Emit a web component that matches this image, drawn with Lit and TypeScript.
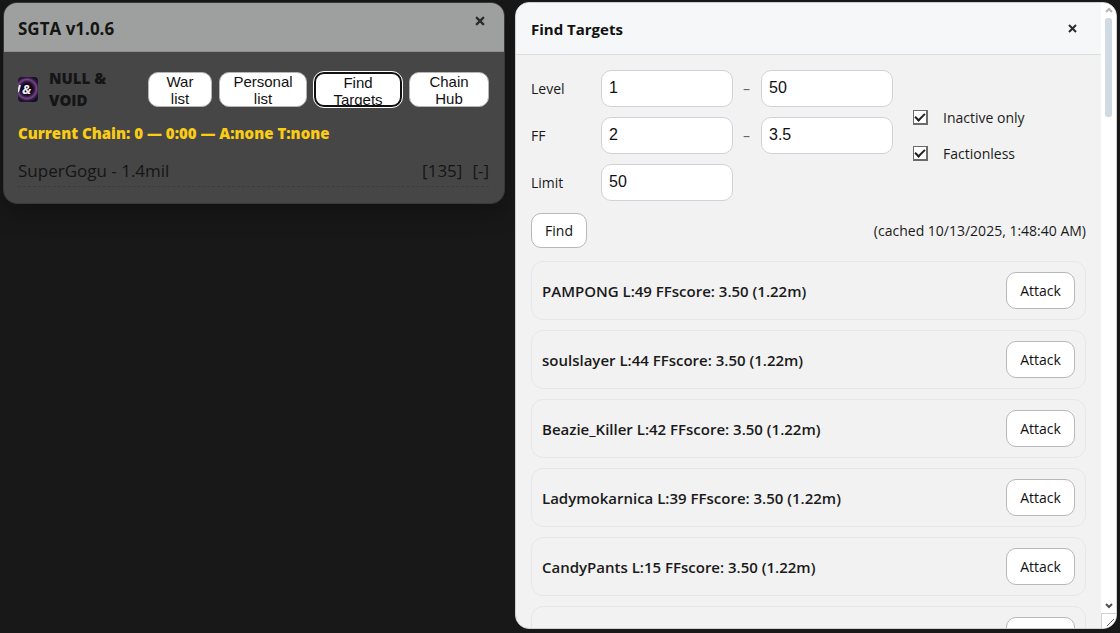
import { LitElement, html, css, svg } from "lit";
import { customElement, property } from "lit/decorators.js";
import { classMap } from "lit/directives/class-map.js";

interface Target {
  name: string;
  level: number;
  score: string;
  stats: string;
}

const TARGETS: Target[] = [
  { name: "PAMPONG", level: 49, score: "3.50", stats: "1.22m" },
  { name: "soulslayer", level: 44, score: "3.50", stats: "1.22m" },
  { name: "Beazie_Killer", level: 42, score: "3.50", stats: "1.22m" },
  { name: "Ladymokarnica", level: 39, score: "3.50", stats: "1.22m" },
  { name: "CandyPants", level: 15, score: "3.50", stats: "1.22m" },
  { name: "", level: 0, score: "", stats: "" },
];

const cross = svg`<path d="M1 1 L8 8 M8 1 L1 8" stroke="currentColor" stroke-width="2" fill="none" />`;

@customElement("chain-window")
export class ChainWindow extends LitElement {
  static styles = css`
    :host {
      display: block;
      border: 1px solid #393939;
      border-radius: 14px;
      background: #464646;
      color: #151515;
      overflow: hidden;
      box-shadow: 0 8px 24px rgba(0, 0, 0, 0.3);
    }
    .header {
      display: flex;
      justify-content: space-between;
      align-items: flex-start;
      height: 49px;
      padding: 0 15px 0 14px;
      background: #9ea09f;
      border-bottom: 1px solid #8f9190;
      box-sizing: border-box;
    }
    .title {
      margin: 0;
      font-size: 17px;
      line-height: 51px;
      font-weight: 700;
    }
    .close {
      border: 0;
      padding: 4px;
      margin-top: 9px;
      background: none;
      color: #2b2b2b;
      line-height: 0;
    }
    .body {
      padding: 15px 15px 16px 14px;
    }
    .top {
      display: flex;
      align-items: center;
      gap: 7px;
    }
    .faction {
      flex: 1;
      display: flex;
      align-items: center;
      gap: 11px;
      font-weight: 800;
      font-size: 15px;
      line-height: 22px;
    }
    .logo {
      flex: none;
      display: block;
    }
    .amp {
      font: italic 700 13px "Open Sans", sans-serif;
      fill: #f2eef5;
    }
    .tab {
      height: 35px;
      padding: 0 12px;
      border: 1px solid #b5b5b5;
      border-radius: 10px;
      background: #fff;
      color: #111;
      font: 15px/17px "Liberation Sans", Arial, sans-serif;
      overflow: hidden;
      width: 88px;
    }
    .narrow {
      width: 64px;
    }
    .medium {
      width: 80px;
    }
    .active {
      border: 2px solid #101010;
      outline: 1px solid #fff;
    }
    .chain {
      margin: 10px 0 0;
      color: #facc15;
      font-size: 15px;
      line-height: 24px;
      font-weight: 800;
    }
    .member {
      display: flex;
      gap: 10px;
      margin-top: 8px;
      padding: 6px 0 3px;
      font-size: 17px;
      line-height: 24px;
      border-bottom: 1px dashed #3c3c3c;
    }
    .name {
      flex: 1;
    }
  `;

  render() {
    return html`
      <header class="header">
        <h1 class="title">SGTA v1.0.6</h1>
        <button class="close" aria-label="Close">
          <svg width="10" height="10" viewBox="0 0 9 9">${cross}</svg>
        </button>
      </header>
      <div class="body">
        <div class="top">
          <div class="faction">
            <svg class="logo" width="20" height="25" viewBox="0 0 20 25" aria-hidden="true">
              <defs>
                <clipPath id="edge"><rect width="20" height="25" rx="4" /></clipPath>
                <radialGradient id="glow" gradientUnits="userSpaceOnUse" cx="9" cy="12" r="14">
                  <stop offset="0.4" stop-color="#120a1c" />
                  <stop offset="0.55" stop-color="#3a2048" />
                  <stop offset="0.68" stop-color="#74468a" />
                  <stop offset="0.82" stop-color="#33183f" />
                  <stop offset="1" stop-color="#100c1c" />
                </radialGradient>
              </defs>
              <g clip-path="url(#edge)">
                <rect width="20" height="25" fill="url(#glow)" />
                <path d="M0 15 L2 8" stroke="#e8e4ec" stroke-width="2" />
                <text class="amp" x="4" y="17">&amp;</text>
              </g>
            </svg>
            <span>NULL &amp;<br />VOID</span>
          </div>
          ${[
            ["War list", "narrow"],
            ["Personal list", ""],
            ["Find Targets", "active"],
            ["Chain Hub", "medium"],
          ].map(
            ([label, kind]) => html`<button
              class=${classMap({
                tab: true,
                narrow: kind === "narrow",
                medium: kind === "medium",
                active: kind === "active",
              })}
            >${label}</button>`
          )}
        </div>
        <p class="chain">Current Chain: 0 — 0:00 — A:none T:none</p>
        <div class="member">
          <span class="name">SuperGogu - 1.4mil</span>
          <span>[135]</span>
          <span>[-]</span>
        </div>
      </div>
    `;
  }
}

@customElement("target-card")
export class TargetCard extends LitElement {
  @property({ attribute: false }) target!: Target;

  static styles = css`
    :host {
      display: flex;
      flex: none;
      justify-content: space-between;
      align-items: center;
      gap: 10px;
      padding: 10px;
      border: 1px solid #e5e7eb;
      border-radius: 12px;
      font-size: 15px;
      line-height: 22px;
      font-weight: 600;
    }
    .attack {
      height: 37px;
      min-width: 69px;
      padding: 0 12px;
      border: 1px solid #b8b8b8;
      border-radius: 10px;
      background: #fff;
      color: #111;
      font: inherit;
      font-size: 14px;
      font-weight: 400;
    }
  `;

  render() {
    const t = this.target;
    return html`
      <span>${t.name ? `${t.name} L:${t.level} FFscore: ${t.score} (${t.stats})` : ""}</span>
      <button class="attack" aria-label="Attack">${t.name ? "Attack" : ""}</button>
    `;
  }
}

@customElement("targets-window")
export class TargetsWindow extends LitElement {
  static styles = css`
    :host {
      display: flex;
      box-sizing: border-box;
      border: 1px solid #d0d0d0;
      border-radius: 14px;
      background: #f2f2f2;
      color: #1a1a1a;
      overflow: hidden;
      font-size: 14px;
      line-height: 20px;
    }
    .content {
      flex: 1;
      min-width: 0;
      overflow: hidden;
    }
    .header {
      display: flex;
      justify-content: space-between;
      align-items: center;
      height: 52px;
      padding: 0 20px 0 15px;
      background: #f6f7f9;
      border-bottom: 1px solid #dedede;
      box-sizing: border-box;
    }
    .title {
      margin: 0;
      font-size: 15px;
      line-height: 22px;
      font-weight: 700;
      color: #111;
    }
    .close {
      border: 0;
      padding: 4px;
      background: none;
      color: #2b2b2b;
      line-height: 0;
    }
    .body {
      padding: 15px;
    }
    .filters {
      display: flex;
      align-items: center;
      gap: 20px;
    }
    .fields {
      display: grid;
      grid-template-columns: 60px 132px 8px 132px;
      gap: 10px;
      align-items: center;
    }
    .field {
      width: 100%;
      height: 37px;
      box-sizing: border-box;
      padding: 0 7px 2px;
      border: 1px solid #d1d1db;
      border-radius: 10px;
      background: #fff;
      color: #111;
      font: 16px "Liberation Sans", Arial, sans-serif;
    }
    .dash {
      color: #666;
    }
    .checks {
      display: flex;
      flex-direction: column;
      gap: 14px;
    }
    .check {
      display: flex;
      align-items: center;
      gap: 15px;
      line-height: 22px;
    }
    .box {
      appearance: none;
      width: 15px;
      height: 15px;
      margin: 0;
      border: 1px solid #6b6b6b;
      border-right-width: 2px;
      border-bottom-width: 2px;
      background: #fff;
      display: grid;
      place-items: center;
    }
    .box:checked::before {
      content: "";
      box-sizing: border-box;
      width: 10px;
      height: 6px;
      border-left: 2px solid #222;
      border-bottom: 2px solid #222;
      transform: translateY(-1px) rotate(-45deg);
    }
    .actions {
      display: flex;
      justify-content: space-between;
      align-items: center;
      margin-top: 12px;
    }
    .find {
      height: 35px;
      min-width: 56px;
      padding: 0 12px;
      border: 1px solid #b8b8b8;
      border-radius: 10px;
      background: #fff;
      color: #111;
      font: inherit;
    }
    .list {
      display: flex;
      flex-direction: column;
      gap: 10px;
      margin-top: 13px;
    }
    .scrollbar {
      flex: none;
      width: 15px;
      display: flex;
      flex-direction: column;
      align-items: center;
      background: #fff;
      overflow: hidden;
    }
    .arrow {
      flex: none;
      margin: 4px 0;
    }
    .track {
      flex: 1;
      width: 7px;
    }
    .thumb {
      height: 17%;
      border-radius: 3px;
      background: #d0dae3;
    }
    .grip {
      flex: none;
      border: solid #cfcfcf;
      border-width: 1px 0 0 1px;
      width: 15px;
      height: 15px;
      box-sizing: border-box;
      line-height: 0;
    }
  `;

  render() {
    return html`
      <div class="content">
        <header class="header">
          <h2 class="title">Find Targets</h2>
          <button class="close" aria-label="Close">
            <svg width="9" height="9" viewBox="0 0 9 9">${cross}</svg>
          </button>
        </header>
        <div class="body">
          <div class="filters">
            <div class="fields">
              <label for="level-min">Level</label>
              <input class="field" id="level-min" .value=${"1"} />
              <span class="dash">–</span>
              <input class="field" aria-label="Level maximum" .value=${"50"} />
              <label for="ff-min">FF</label>
              <input class="field" id="ff-min" .value=${"2"} />
              <span class="dash">–</span>
              <input class="field" aria-label="FF maximum" .value=${"3.5"} />
              <label for="limit">Limit</label>
              <input class="field" id="limit" .value=${"50"} />
            </div>
            <div class="checks">
              <label class="check"><input class="box" type="checkbox" checked />Inactive only</label>
              <label class="check"><input class="box" type="checkbox" checked />Factionless</label>
            </div>
          </div>
          <div class="actions">
            <button class="find">Find</button>
            <span>(cached 10/13/2025, 1:48:40 AM)</span>
          </div>
          <div class="list">
            ${TARGETS.map((t) => html`<target-card .target=${t}></target-card>`)}
          </div>
        </div>
      </div>
      <div class="scrollbar" aria-hidden="true">
        <svg class="arrow" width="8" height="7" viewBox="0 0 8 7"><path d="M1 5 L4 2 L7 5" fill="none" stroke="#b5b5b5" stroke-width="2" /></svg>
        <div class="track"><div class="thumb"></div></div>
        <svg class="arrow" width="8" height="7" viewBox="0 0 8 7"><path d="M1 2 L4 5 L7 2" fill="none" stroke="#505050" stroke-width="2" /></svg>
        <div class="grip">
          <svg width="14" height="14" viewBox="0 0 14 14"><path d="M5 12 L12 5 M9 12 L12 9" stroke="#666" fill="none" /></svg>
        </div>
      </div>
    `;
  }
}

@customElement("app-root")
export class AppRoot extends LitElement {
  static styles = css`
    :host {
      display: grid;
      grid-template-columns: 502fr 602fr;
      gap: 10px;
      align-items: start;
      box-sizing: border-box;
      height: 100vh;
      padding: 2px 3px 4px;
      background: #181818;
      font-family: "Segoe UI", "Open Sans", "Noto Sans", sans-serif;
      overflow: hidden;
    }
    .targets {
      height: 100%;
      min-height: 0;
    }
  `;

  render() {
    return html`
      <chain-window></chain-window>
      <targets-window class="targets"></targets-window>
    `;
  }
}
